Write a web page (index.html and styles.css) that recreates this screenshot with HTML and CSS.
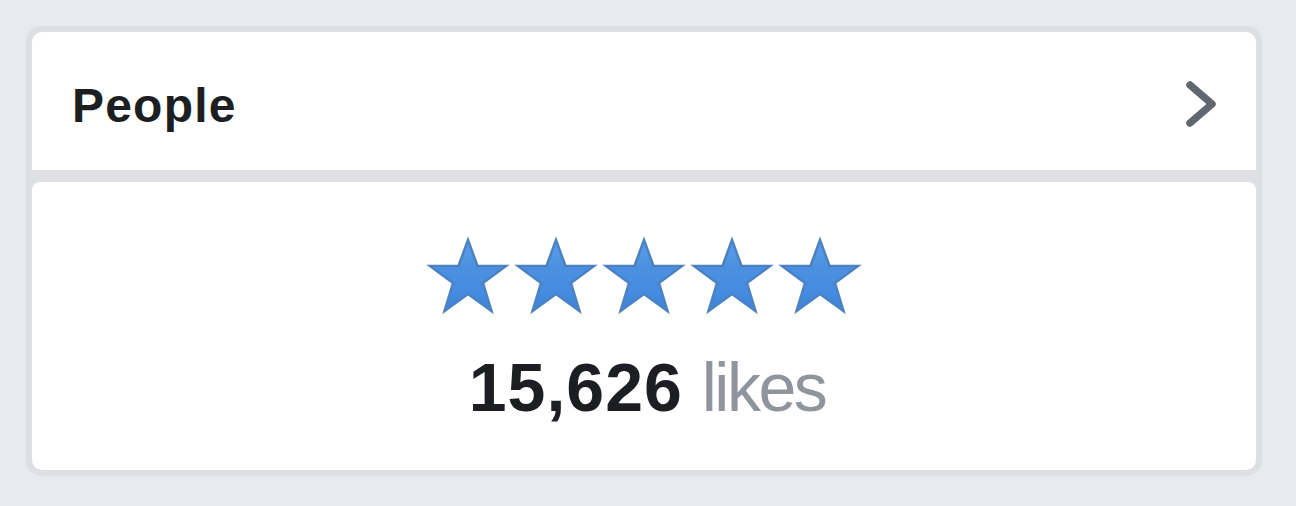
FILE: index.html
```html
<!DOCTYPE html>
<html lang="en">
<head>
<meta charset="UTF-8">
<meta name="viewport" content="width=device-width, initial-scale=1.0">
<title>People</title>
<link rel="stylesheet" href="styles.css">
</head>
<body>

<div class="panel">
    <div class="card header-card">
        <span class="title">People</span>
        <svg class="chevron" width="34" height="48" viewBox="0 0 34 48">
            <polyline points="6,5 28,24 6,43" fill="none" stroke="#606770" stroke-width="7.5" stroke-linecap="round" stroke-linejoin="round"/>
        </svg>
    </div>
    <div class="card rating-card">
        <div class="stars">
            <svg class="star" viewBox="0 0 84 78"><use href="#star"/></svg>
            <svg class="star" viewBox="0 0 84 78"><use href="#star"/></svg>
            <svg class="star" viewBox="0 0 84 78"><use href="#star"/></svg>
            <svg class="star" viewBox="0 0 84 78"><use href="#star"/></svg>
            <svg class="star" viewBox="0 0 84 78"><use href="#star"/></svg>
        </div>
        <div class="count"><b>15,626</b> <span class="unit">likes</span></div>
    </div>
</div>

<svg width="0" height="0" style="position:absolute">
    <defs>
        <linearGradient id="starFill" x1="0" y1="0" x2="0" y2="1">
            <stop offset="0" stop-color="#5a9ee8"/>
            <stop offset="0.45" stop-color="#4a8fe0"/>
            <stop offset="1" stop-color="#3f86dc"/>
        </linearGradient>
        <g id="star">
            <polygon points="42,3 51.5,29 80,29 57,46 65.5,74 42,57 18.5,74 27,46 4,29 32.5,29" fill="url(#starFill)" stroke="#4a82c4" stroke-width="2.5" stroke-linejoin="miter"/>
        </g>
    </defs>
</svg>

</body>
</html>
```

FILE: styles.css
```css
body {
    margin: 0;
    background-color: #e9eaed;
    font-family: "Liberation Sans", Arial, sans-serif;
    padding: 26px 34px 30px 26px;
}

.panel {
    background-color: #dddfe2;
    border-radius: 16px;
    padding: 6px;
    display: flex;
    flex-direction: column;
    gap: 12px;
}

.card {
    background-color: #fff;
}

.header-card {
    height: 138px;
    border-radius: 10px 10px 0 0;
    display: flex;
    align-items: center;
    justify-content: space-between;
    padding: 0 38px 0 40px;
}

.title {
    font-size: 48px;
    font-weight: bold;
    color: #1c1e21;
    letter-spacing: 1.2px;
    margin-top: 9px;
}

.chevron {
    display: block;
    margin-top: 6px;
}

.rating-card {
    height: 288px;
    border-radius: 8px 8px 10px 10px;
    display: flex;
    flex-direction: column;
    align-items: center;
}

.stars {
    display: flex;
    gap: 4px;
    margin-top: 55px;
}

.star {
    width: 84px;
    height: 78px;
    display: block;
}

.count {
    margin-top: 38px;
    font-size: 68px;
    line-height: 1;
    color: #1c1e21;
    margin-left: 6px;
}

.count b {
    font-weight: bold;
    letter-spacing: 1px;
}

.unit {
    color: #90949c;
    letter-spacing: -2.5px;
}
```
